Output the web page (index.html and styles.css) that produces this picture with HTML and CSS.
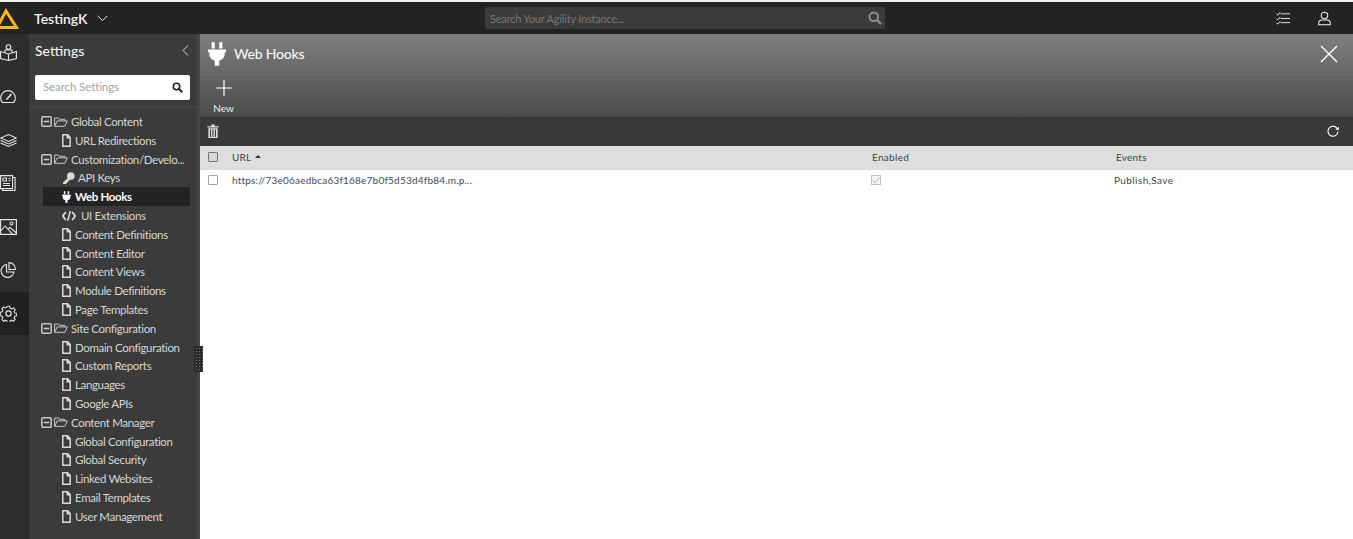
FILE: index.html
```html
<!DOCTYPE html>
<html lang="en">
<head>
<meta charset="utf-8">
<title>Web Hooks</title>
<link rel="stylesheet" href="styles.css">
</head>
<body>
<svg class="defs" width="0" height="0">
  <symbol id="file" viewBox="0 0 9 13"><path d="M.8.8h4.800l2.600 2.700v8.700H.8z M5.300.8v3h2.900" fill="none" stroke="currentColor" stroke-width="1.500"/></symbol>
  <symbol id="folder" viewBox="0 0 14 10"><path d="M.6 9.300V1h4l1 1.300h5.200v1.600M.6 9.300h10.200l2.600-5.400H3.200z" fill="none" stroke="currentColor" stroke-width="1"/></symbol>
  <symbol id="minus" viewBox="0 0 11 11"><rect x=".8" y=".8" width="9.400" height="9.400" rx="1" fill="none" stroke="currentColor" stroke-width="1.500"/><path d="M2.700 5.500h5.600" stroke="currentColor" stroke-width="1.600"/></symbol>
  <symbol id="plug" viewBox="0 0 20 26"><path d="M4 0h3.500v7H4zM12.500 0H16v7h-3.500zM0 8h20v3h-1.500v2c0 4-2.500 6.500-6 7.200V26h-5v-5.800c-3.500-.7-6-3.200-6-7.200v-2H0z" fill="currentColor"/></symbol>
</svg>
<div class="strip"></div>
<header class="topbar">
  <div class="brand">
    <svg class="logo" width="20" height="24" viewBox="0 0 20 24"><path d="M6 5L-3 21.500h19.500z" fill="none" stroke="#f5b81c" stroke-width="3"/></svg>
    <span class="instance">TestingK</span>
    <svg class="chev" width="11" height="7" viewBox="0 0 11 7"><path d="M.7.800l4.800 4.800L10.300.800" fill="none" stroke="#e8e8e8" stroke-width="1"/></svg>
  </div>
  <div class="global-search">
    <span>Search Your Agility Instance...</span>
    <svg width="14" height="14" viewBox="0 0 14 14"><circle cx="5.800" cy="5.800" r="4.300" fill="none" stroke="#8d8e8d" stroke-width="2"/><path d="M9 9l4 4" stroke="#8d8e8d" stroke-width="2.400"/></svg>
  </div>
  <div class="top-icons">
    <svg width="14" height="14" viewBox="0 0 15 14"><path d="M.5 2.500l1.500 1.500L4.500.8M.5 7.500l1.500 1.500 2.500-3.200M.5 12.500l1.500 1 2.500-3" fill="none" stroke="#eee" stroke-width="1"/><path d="M5 2.500h10M5 7.500h10M5 12h10" stroke="#eee" stroke-width="1"/></svg>
    <svg width="13" height="15" viewBox="0 0 14 15"><circle cx="7" cy="4.300" r="3.500" fill="none" stroke="#f2f2f2" stroke-width="1.100"/><path d="M.8 14.200v-1.500c0-2.200 1.800-3.500 3.500-3.500h5.400c1.700 0 3.500 1.300 3.500 3.500v1.500z" fill="none" stroke="#f2f2f2" stroke-width="1.100"/></svg>
  </div>
</header>
<div class="app">
  <nav class="rail">
    <a class="rail-item rail-first"><svg width="17" height="17" viewBox="0 0 17 17"><circle cx="8.500" cy="3" r="2.300"/><path d="M.6 7.500l7.900 2.500 7.900-2.500v7l-7.900 2-7.900-2zM8.500 10v6.500M5 8.800V6h7v2.800"/></svg></a>
    <a class="rail-item"><svg width="16" height="13" viewBox="0 0 16 13"><path d="M2.500 12.500C1.300 11.300.6 9.800.6 8a7.400 7.400 0 0 1 14.800 0c0 1.800-.7 3.300-1.900 4.500z"/><path d="M6.500 9.500L11.500 4" stroke-width="1.600"/></svg></a>
    <a class="rail-item"><svg width="17" height="13" viewBox="0 0 17 13"><path d="M8.500.6L16.400 4l-7.900 3.400L.6 4zM.6 6.500l7.900 3.400 7.900-3.400M.6 9l7.900 3.400L16.400 9"/></svg></a>
    <a class="rail-item"><svg width="16" height="16" viewBox="0 0 16 16"><path d="M.6.600h12v13H.6zM12.600 2.500h2.500v13H2.500v-2"/><path d="M3 3h3.500v3H3zM8.500 3.500h2M8.500 5.500h2M3 8.500h7M3 10.500h7"/></svg></a>
    <a class="rail-item"><svg width="17" height="16" viewBox="0 0 17 16"><path d="M.6.600h15.800v14.800H.6zM.6 12l4.500-5 7.500 8.400M8 10l2-1.500 6.400 5.500"/><circle cx="11.500" cy="4.500" r="1.500"/></svg></a>
    <a class="rail-item"><svg width="16" height="16" viewBox="0 0 16 16"><path d="M6.500 2.500a6.500 6.500 0 1 0 7.500 7.500H6.500zM9 .6A6.500 6.500 0 0 1 15.400 7.500H9z"/></svg></a>
    <a class="rail-item is-active"><svg width="17" height="17" viewBox="0 0 16 16"><circle cx="8" cy="8" r="2.500"/><path d="M6.700.7h2.600l.4 2 1.500.7 1.800-1.100 1.800 1.800-1.100 1.800.7 1.500 2 .4v2.600l-2 .4-.7 1.500 1.100 1.800-1.800 1.800-1.800-1.100-1.500.7-.4 2H6.700l-.4-2-1.500-.7-1.800 1.100-1.800-1.800 1.100-1.800-.7-1.500-2-.4V6.700l2-.4.700-1.500-1.100-1.800 1.800-1.800 1.800 1.100 1.500-.7z" transform="translate(.6 .6) scale(.925)"/></svg></a>
  </nav>
  <aside class="panel">
    <div class="panel-head">
      <div class="panel-title"><span>Settings</span>
        <svg width="7" height="11" viewBox="0 0 7 11"><path d="M6 .5l-5 5 5 5" fill="none" stroke="#d8d8d8" stroke-width="1"/></svg>
      </div>
      <div class="panel-search"><span class="search-hint">Search Settings</span>
        <svg width="11" height="11" viewBox="0 0 11 11"><circle cx="4.500" cy="4.500" r="3.200" fill="none" stroke="#222" stroke-width="1.600"/><path d="M7 7l3.300 3.300" stroke="#222" stroke-width="2"/></svg>
      </div>
    </div>
    <ul class="tree">
      <li class="row folder"><svg class="i-min"><use href="#minus"/></svg><svg class="i-fold"><use href="#folder"/></svg><span>Global Content</span></li>
      <li class="row leaf"><svg class="i-file"><use href="#file"/></svg><span>URL Redirections</span></li>
      <li class="row folder"><svg class="i-min"><use href="#minus"/></svg><svg class="i-fold"><use href="#folder"/></svg><span>Customization/Develo...</span></li>
      <li class="row leaf"><svg class="i-key" viewBox="0 0 13 12"><circle cx="8.800" cy="4" r="3.800" fill="currentColor"/><path d="M7 5L1 10.500V12h3l4.500-5z" fill="currentColor"/></svg><span>API Keys</span></li>
      <li class="row leaf is-current"><svg class="i-plug"><use href="#plug"/></svg><span>Web Hooks</span></li>
      <li class="row leaf"><svg class="i-code" viewBox="0 0 14 10"><path d="M3.800 1L.8 5l3 4M10.200 1l3 4-3 4" fill="none" stroke="currentColor" stroke-width="1.800"/><path d="M8.300 0L5.700 10" stroke="currentColor" stroke-width="1.500"/></svg><span>UI Extensions</span></li>
      <li class="row leaf"><svg class="i-file"><use href="#file"/></svg><span>Content Definitions</span></li>
      <li class="row leaf"><svg class="i-file"><use href="#file"/></svg><span>Content Editor</span></li>
      <li class="row leaf"><svg class="i-file"><use href="#file"/></svg><span>Content Views</span></li>
      <li class="row leaf"><svg class="i-file"><use href="#file"/></svg><span>Module Definitions</span></li>
      <li class="row leaf"><svg class="i-file"><use href="#file"/></svg><span>Page Templates</span></li>
      <li class="row folder"><svg class="i-min"><use href="#minus"/></svg><svg class="i-fold"><use href="#folder"/></svg><span>Site Configuration</span></li>
      <li class="row leaf"><svg class="i-file"><use href="#file"/></svg><span>Domain Configuration</span></li>
      <li class="row leaf"><svg class="i-file"><use href="#file"/></svg><span>Custom Reports</span></li>
      <li class="row leaf"><svg class="i-file"><use href="#file"/></svg><span>Languages</span></li>
      <li class="row leaf"><svg class="i-file"><use href="#file"/></svg><span>Google APIs</span></li>
      <li class="row folder"><svg class="i-min"><use href="#minus"/></svg><svg class="i-fold"><use href="#folder"/></svg><span>Content Manager</span></li>
      <li class="row leaf"><svg class="i-file"><use href="#file"/></svg><span>Global Configuration</span></li>
      <li class="row leaf"><svg class="i-file"><use href="#file"/></svg><span>Global Security</span></li>
      <li class="row leaf"><svg class="i-file"><use href="#file"/></svg><span>Linked Websites</span></li>
      <li class="row leaf"><svg class="i-file"><use href="#file"/></svg><span>Email Templates</span></li>
      <li class="row leaf"><svg class="i-file"><use href="#file"/></svg><span>User Management</span></li>
    </ul>
    <div class="splitter"></div>
  </aside>
  <main class="main">
    <section class="hero">
      <div class="hero-title">
        <svg class="hero-plug"><use href="#plug"/></svg>
        <h1>Web Hooks</h1>
        <svg class="close" width="18" height="18" viewBox="0 0 18 18"><path d="M1 1l16 16M17 1L1 17" stroke="#fff" stroke-width="1.400"/></svg>
      </div>
      <div class="hero-actions">
        <button class="new-btn">
          <svg width="16" height="16" viewBox="0 0 16 16"><path d="M8 0v16M0 8h16" stroke="#fff" stroke-width="1.200"/></svg>
          <span>New</span>
        </button>
      </div>
    </section>
    <div class="toolbar">
      <svg width="12" height="14" viewBox="0 0 11 13"><path d="M.3 2h10.400v1.200H.3zM3.800 2V.5h3.400V2M1.200 4h8.600v9H1.200z" fill="#ddd"/><path d="M3.200 5v7M5.500 5v7M7.800 5v7" stroke="#383938" stroke-width="1"/></svg>
      <svg width="12" height="12" viewBox="0 0 12 12"><path d="M10.700 4.500A5 5 0 1 0 11 6.500" fill="none" stroke="#fff" stroke-width="1.100"/><path d="M8.500 4.700l3.200.3.300-3.200z" fill="#fff"/></svg>
    </div>
    <div class="table">
      <div class="thead">
        <span class="box"></span>
        <span class="c-url">URL <i class="sort"></i></span>
        <span class="c-enabled">Enabled</span>
        <span class="c-events">Events</span>
      </div>
      <div class="tbody">
        <span class="box box-light"></span>
        <span class="c-url link">https://73e06aedbca63f168e7b0f5d53d4fb84.m.p...</span>
        <span class="c-enabled"><span class="checked"><svg width="8" height="7" viewBox="0 0 8 7"><path d="M.8 3.500l2.200 2.200L7.200 1" fill="none" stroke="#9db0b5" stroke-width="1"/></svg></span></span>
        <span class="c-events ev">Publish,Save</span>
      </div>
    </div>
  </main>
</div>
</body>
</html>
```

FILE: styles.css
```css
* { box-sizing: border-box; }
html, body { height: 100%; }
body {
  margin: 0;
  height: 539px;
  overflow: hidden;
  background: #fff;
  font-family: Lato, "Noto Sans", sans-serif;
  display: flex;
  flex-direction: column;
}
.defs { position: absolute; }
.strip { height: 2px; background: #f1f1f1; flex: none; }

.topbar {
  flex: none;
  height: 32px;
  background: #232323;
  display: grid;
  grid-template-columns: 485px 400px 1fr;
  align-items: center;
}
.brand { display: flex; align-items: center; height: 100%; overflow: hidden; }
.logo { flex: none; }
.instance { color: #f4f4f4; font-size: 14px; font-weight: 600; margin-left: 14px; }
.chev { margin-left: 9px; }
.global-search {
  height: 22px;
  background: #3a3b3a;
  border-radius: 2px;
  display: flex;
  align-items: center;
  justify-content: space-between;
  padding: 0 3px 0 5px;
  color: #777877;
  font-size: 11px;
  letter-spacing: -.2px;
}
.top-icons { display: flex; justify-content: flex-end; gap: 28px; padding-right: 22px; align-items: center; }

.app { flex: 1; display: flex; min-height: 0; }
.rail { flex: none; width: 29px; background: #2d2d2d; display: flex; flex-direction: column; }
.rail-item { height: 43.400px; display: flex; align-items: center; padding-left: 0; flex: none; }
.rail-item svg { fill: none; stroke: #e4e6e6; stroke-width: 1.100; display: block; }
.rail-first { height: 41px; }
.rail-first svg { margin-top: -4px; }
.rail-item.is-active { background: #212121; height: 43px; }

.panel { position: relative; flex: none; width: 171px; background: #3a3b3a; border-right: 3px solid #444544; }
.panel-head { height: 74px; padding: 0 7px 0 6px; border-bottom: 2px solid #434443; }
.panel-title { height: 32px; margin-bottom: 9px; display: flex; align-items: center; justify-content: space-between; padding-right: 1px; color: #f0f0f0; font-size: 14px; font-weight: 500; }
.panel-search {
  height: 25px;
  background: #fff;
  border-radius: 2px;
  display: flex;
  align-items: center;
  justify-content: space-between;
  padding: 0 7px 0 8px;
  color: #a2a2a2;
  font-size: 11.500px;
  letter-spacing: -.1px;
}
.search-hint { margin-top: -2px; }
.tree { list-style: none; margin: 0; padding: 4.200px 7px 0 14px; }
.row { height: 18.800px; display: flex; align-items: center; color: #d6d6d6; font-size: 11.500px; letter-spacing: -.35px; white-space: nowrap; }
.row svg { flex: none; }
.i-min { width: 11px; height: 11px; color: #c9c9c9; margin-left: -2px; }
.i-fold { width: 14px; height: 10px; margin-left: 2px; color: #c9c9c9; margin-right: 3px; }
.leaf svg { margin-left: 19px; }
.i-file { width: 9px; height: 13px; color: #d9d9d9; margin-right: 4px; }
.i-key { width: 13px; height: 12px; color: #d9d9d9; margin-right: 3px; }
.i-code { width: 14px; height: 10px; color: #d9d9d9; margin-right: 5px; }
.i-plug { width: 9px; height: 12px; color: #fff; margin-right: 4px; }
.is-current { background: #232323; color: #fff; font-weight: 700; }

.splitter {
  position: absolute;
  right: -6px;
  top: 312px;
  width: 9px;
  height: 26px;
  background: #2b2b2b;
  background-image: radial-gradient(#777 .6px, transparent .8px);
  background-size: 3px 3px;
  background-position: 1px 1px;
}

.main { flex: 1; min-width: 0; display: flex; flex-direction: column; background: #fff; }
.hero { height: 83px; flex: none; background: linear-gradient(#7f7f7f, #4a4b4a); }
.hero-title { height: 41px; display: flex; align-items: center; padding: 0 15px 0 8px; border-bottom: 1px solid #6d6e6d; }
.hero-plug { width: 18px; height: 24px; color: #fff; flex: none; }
.hero-title h1 { margin: -2px 0 0 8px; flex: 1; color: #f6f6f6; font-size: 14px; font-weight: 500; letter-spacing: -.2px; }
.hero-actions { padding: 5px 0 0 13px; }
.new-btn { all: unset; display: flex; flex-direction: column; align-items: center; gap: 6px; width: 21px; color: #f0f0f0; font-size: 10px; }
.new-btn svg { display: block; }
.toolbar { height: 29px; flex: none; background: #383938; display: flex; align-items: center; justify-content: space-between; padding: 0 14px 1px 7px; }

.table { color: #444; font-size: 10px; }
.thead, .tbody { display: grid; grid-template-columns: 32px 640px 244px 1fr; align-items: center; }
.thead { height: 24px; padding-bottom: 2px; background: #dedede; }
.tbody { height: 22px; padding-bottom: 2px; }
.box { width: 10px; height: 10px; margin-left: 8px; border: 1.500px solid #757575; border-radius: 1px; background: #d8d8d8; }
.box-light { border: 1px solid #a5a5a5; background: #fff; }
.c-url { letter-spacing: .2px; }
.sort { display: inline-block; vertical-align: 3px; margin-left: 1px; border: 3px solid transparent; border-bottom: 3px solid #333; border-top: 0; }
.link { color: #3d4a5c; }
.c-events { letter-spacing: .25px; }
.ev { margin-left: -2px; letter-spacing: .4px; }
.c-enabled { letter-spacing: .3px; }
.checked { display: flex; align-items: center; justify-content: center; width: 10px; height: 10px; border: 1px solid #b7c4c8; background: #f6f6f6; margin-left: -1px; }
```
